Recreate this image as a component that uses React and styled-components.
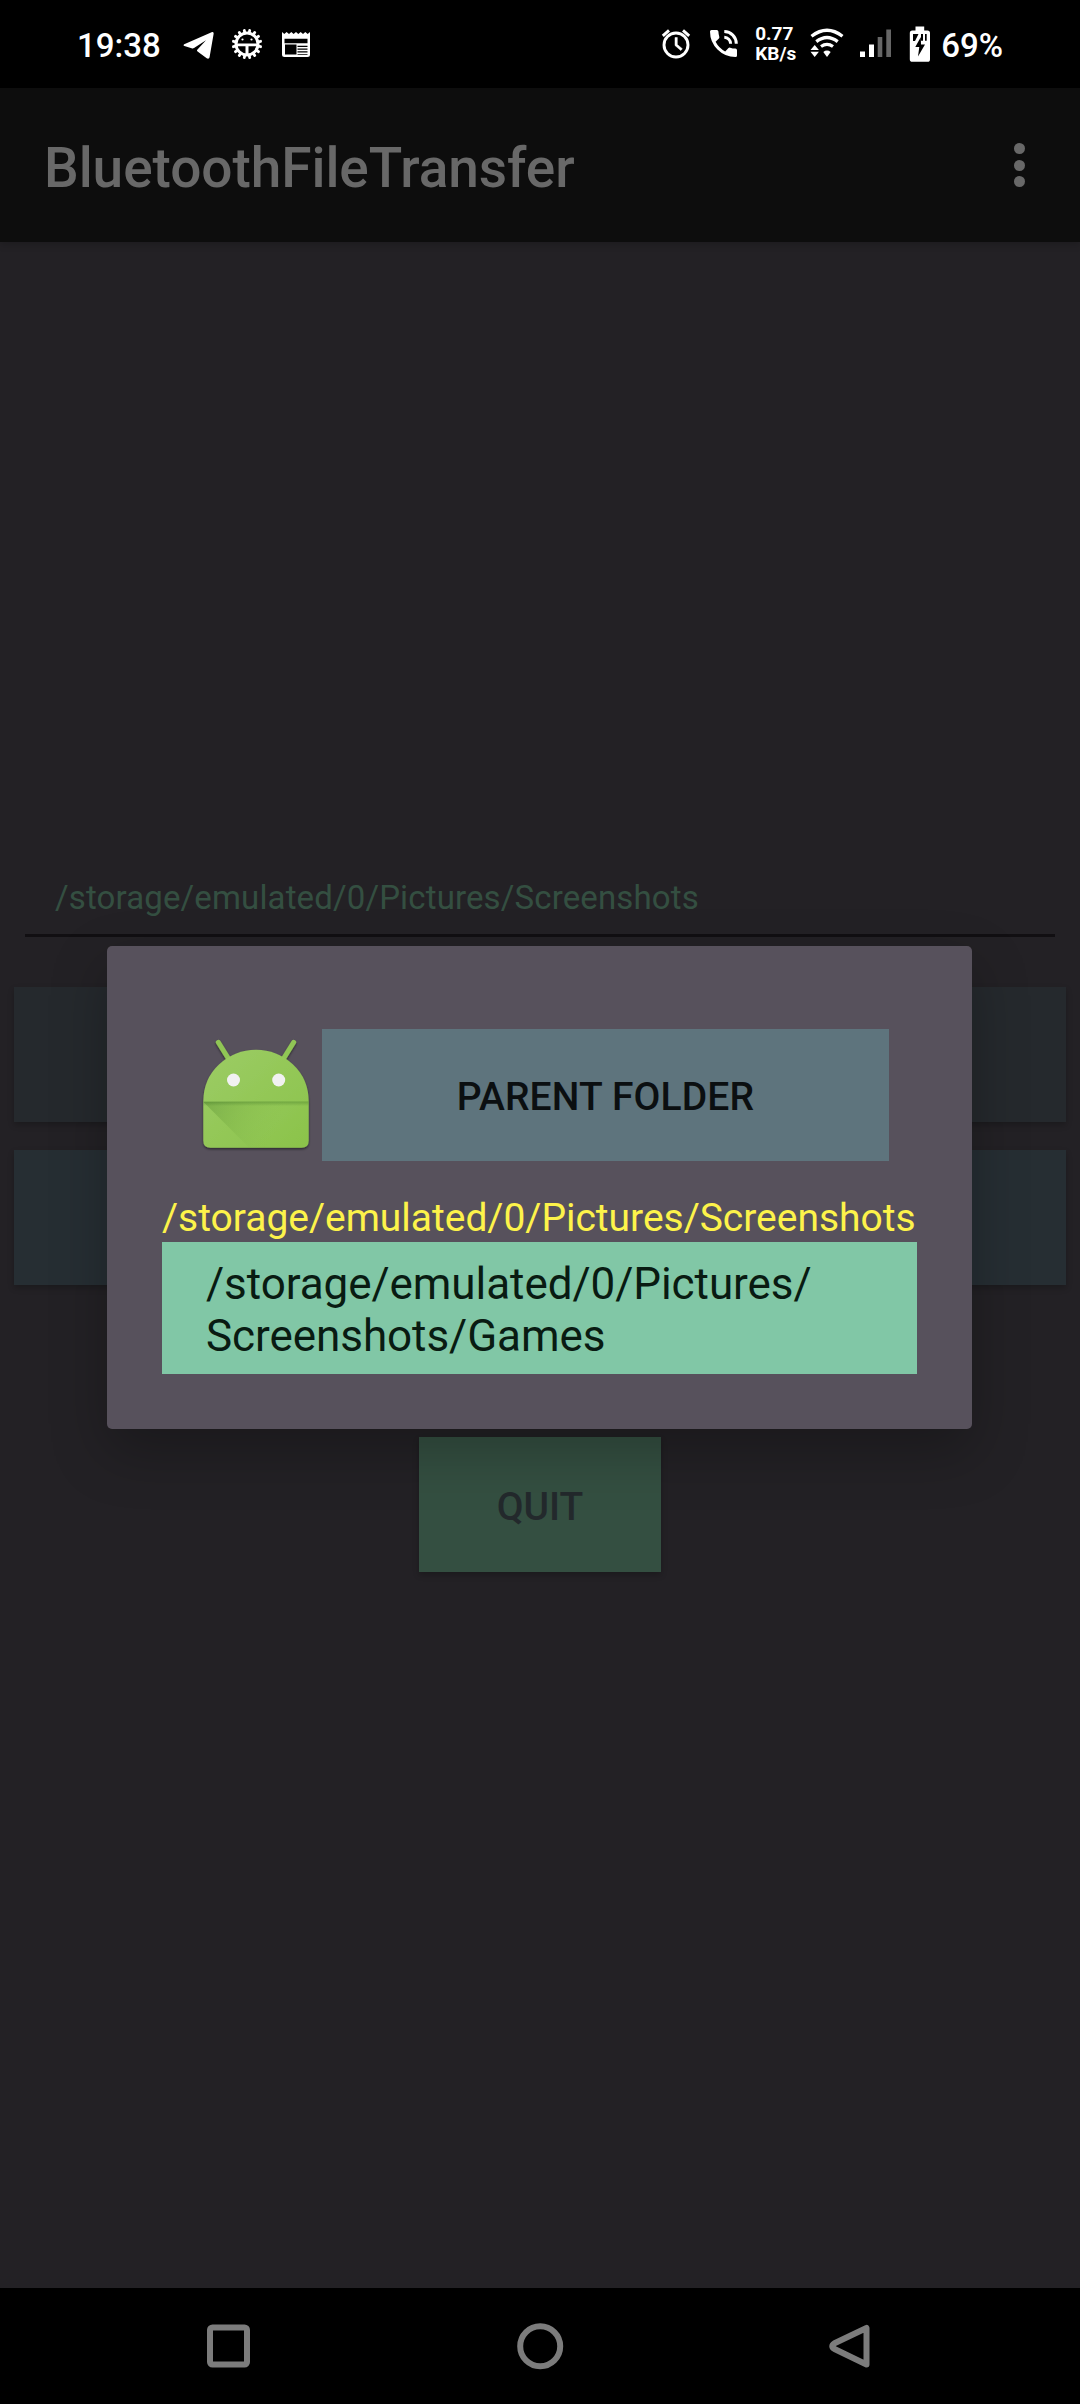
import React from "react";
import styled, { createGlobalStyle } from "styled-components";

const GlobalStyle = createGlobalStyle`
  * { box-sizing: border-box; }
  html, body { margin: 0; padding: 0; background: #232125; }
  body { font-family: Roboto, "Noto Sans", sans-serif; }
`;

const Screen = styled.div`
  position: relative;
  display: flex;
  flex-direction: column;
  width: 1080px;
  height: 2404px;
  overflow: hidden;
  background: #232125;
`;

const StatusBar = styled.header`
  display: flex;
  justify-content: space-between;
  flex: none;
  height: 88px;
  padding: 0 77px;
  background: #000;
  color: #fff;
`;

const StatusGroup = styled.div`
  display: flex;
  align-items: center;
`;

const StatusText = styled.span`
  font-size: 33px;
  font-weight: 500;
  line-height: 40px;
  margin-left: ${(p) => p.$before || 0}px;
  padding-top: 3px;
`;

const NetworkSpeed = styled.span`
  width: 42px;
  margin-left: 17px;
  font-size: 19px;
  font-weight: 700;
  line-height: 20px;
`;

const StatusIcon = styled.svg`
  flex: none;
  display: block;
  width: ${(p) => p.$w}px;
  height: 40px;
  margin-left: ${(p) => p.$before || 0}px;
  fill: #fff;
`;

const AppBar = styled.div`
  position: relative;
  display: flex;
  align-items: center;
  justify-content: space-between;
  flex: none;
  height: 154px;
  padding: 0 44px 0 44px;
  background: #0d0d0d;
  box-shadow: 0 2px 8px rgba(0, 0, 0, 0.2);
`;

const Title = styled.h1`
  margin: 0;
  padding-top: 5px;
  font-size: 55px;
  font-weight: 500;
  line-height: 64px;
  letter-spacing: -0.06px;
  color: #686868;
`;

const OverflowMenu = styled.button`
  display: flex;
  flex-direction: column;
  align-items: center;
  gap: 5.5px;
  width: 34px;
  padding: 0;
  border: 0;
  background: none;
`;

const Dot = styled.span`
  width: 11px;
  height: 11px;
  border-radius: 50%;
  background: #686868;
`;

const Content = styled.main`
  flex: 1;
  display: flex;
  flex-direction: column;
  align-items: stretch;
  padding: 634px 14px 0;
`;

const PathField = styled.div`
  height: 61px;
  margin: 0 11px;
  padding: 2px 30px 0;
  border-bottom: 3px solid #110f12;
  font-size: 33px;
  line-height: 39px;
  letter-spacing: 0.14px;
  color: #344f41;
`;

const PlainButton = styled.button`
  height: 135px;
  margin: ${(p) => p.$top}px 0 0;
  padding: 0;
  border: 0;
  background: ${(p) => p.$tone};
  box-shadow: 0 3px 6px rgba(0, 0, 0, 0.22);
`;

const QuitButton = styled(PlainButton)`
  align-self: center;
  width: 242px;
  padding-top: 5px;
  font-family: inherit;
  font-size: 39px;
  font-weight: 500;
  color: #23292c;
`;

const Dialog = styled.section`
  position: absolute;
  top: 946px;
  left: 107px;
  display: flex;
  flex-direction: column;
  width: 865px;
  height: 483px;
  padding: 83px 55px 55px;
  border-radius: 5px;
  background: #57515c;
  box-shadow: 0 22px 56px rgba(0, 0, 0, 0.26);
`;

const DialogHeader = styled.div`
  display: flex;
  height: 132px;
  padding-right: 28px;
`;

const RobotIcon = styled.svg`
  flex: none;
  width: 132px;
  height: 132px;
  margin-left: 28px;
`;

const ParentButton = styled.button`
  flex: 1;
  border: 0;
  padding: 3px 0 0;
  background: #5e747d;
  font-family: inherit;
  font-size: 39px;
  font-weight: 500;
  letter-spacing: 0.15px;
  color: #0b0f11;
`;

const CurrentPath = styled.p`
  margin: 30px -6px 0 0;
  padding-bottom: 2px;
  height: 51px;
  font-size: 39px;
  line-height: 55px;
  letter-spacing: -0.02px;
  white-space: nowrap;
  color: #fdf34a;
`;

const FolderList = styled.ul`
  margin: 0;
  padding: 0;
  list-style: none;
`;

const FolderItem = styled.li`
  display: flex;
  align-items: center;
  height: 132px;
  padding: 4px 44px 0;
  background: #81c7a6;
  font-size: 44px;
  line-height: 52px;
  letter-spacing: -0.06px;
  color: #091b12;
`;

const NavBar = styled.nav`
  display: flex;
  align-items: center;
  justify-content: space-between;
  flex: none;
  height: 116px;
  padding: 0 204px;
  background: #000;
`;

const NavIcon = styled.svg`
  width: 50px;
  height: 50px;
  fill: none;
  stroke: #7c7c7c;
  stroke-width: 6;
  stroke-linejoin: round;
`;

const GearTeeth = () =>
  Array.from({ length: 16 }, (_, i) => (
    <rect key={i} x="14.6" y="4.8" width="2.8" height="5" rx="1.2" transform={`rotate(${i * 22.5 + 11.25} 16 20)`} />
  ));

function StatusIcons() {
  return (
    <StatusGroup>
      <StatusText>19:38</StatusText>
      <StatusIcon $w={31} $before={22} viewBox="0 0 31 40">
        <path d="M1.2 20.2 28.6 8.3c1.4-.6 2.3.2 2 1.6l-4 23.2c-.3 1.6-1.6 2-2.900 1.100L14.600 27.600c-.8-.6-.8-1.300-.1-2l8.500-9.400-12 7.900c-.8.500-1.500.500-2.400.200L1.400 22.100c-1-.4-1.100-1.400-.2-1.900Z" />
      </StatusIcon>
      <StatusIcon $w={32} $before={17} viewBox="0 0 32 40">
        <GearTeeth />
        <circle cx="16" cy="20" r="11" fill="#000" stroke="#fff" strokeWidth="3" />
        <path d="M5 19.500h22v2.700H17.500V31h-3V22.200H5Z" />
        <circle cx="11.500" cy="15.500" r="1.100" />
        <circle cx="20.500" cy="15.500" r="1.100" />
      </StatusIcon>
      <StatusIcon $w={28} $before={19} viewBox="0 0 28 40">
        <path d="M0 8l2.300 2L4.600 8l2.400 2L9.300 8l2.300 2L14 8l2.300 2 2.400-2L21 10l2.300-2 2.400 2L28 8v22.500q0 2.500-2.500 2.500h-23Q0 33 0 30.500Z" />
        <path d="M2.500 14.700h23v4.600h-23zM3 20.500h11.500V30.400H3zM15.500 21.800H25.500v1.300h-10zM15.500 24.600H25.500v1.200h-10zM15.500 27.300H25.500v1.200h-10zM15.500 29.900H25.500v.9h-10z" fill="#000" />
      </StatusIcon>
    </StatusGroup>
  );
}

function SystemIcons() {
  return (
    <StatusGroup>
      <StatusIcon $w={30} viewBox="0 0 30 40">
        <circle cx="15" cy="21" r="12" fill="none" stroke="#fff" strokeWidth="2.900" />
        <path d="M14 13.500h2.300v7l5 4.200-1.500 1.800-5.800-5Z" stroke="#fff" strokeWidth=".5" />
        <path d="M1.800 11.800 8 6.400M28.200 11.800 22 6.400" stroke="#fff" strokeWidth="3" />
      </StatusIcon>
      <StatusIcon $w={28} $before={19} viewBox="0 0 28 40">
        <path d="M1.500 6h5.300q1.500 0 1.600 1.500.1 2.700.9 5.200.3 1-.4 1.700l-3.300 3.300q3.200 6.300 9.600 9.700l3.300-3.300q.7-.7 1.700-.4 2.500.8 5.200.9Q27 24.700 27 26.300v5.200q0 1.500-1.500 1.500Q15 33 7.500 25.500T0 7.500Q0 6 1.500 6Z" />
        <path d="M14.300 7.500A12.200 12.200 0 0 1 26.300 19.700M14.300 13.200A6.500 6.500 0 0 1 20.600 19.700" fill="none" stroke="#fff" strokeWidth="3" />
      </StatusIcon>
      <NetworkSpeed>
        0.77
        <br />
        KB/s
      </NetworkSpeed>
      <StatusIcon $w={34} $before={13} viewBox="0 0 34 40">
        <g fill="none" stroke="#fff" strokeWidth="3.300">
          <path d="M1.500 12.300Q17 .3 32.500 12.300" />
          <path d="M6.300 17.600Q17 9.300 27.700 17.600" />
          <path d="M11 22.500Q17 18.300 23 22.500" />
        </g>
        <path d="M13.300 28q3.700-2.800 7.400 0L17 33Z" />
        <path d="M4.700 21l4.200 5H.5ZM.5 27.800h8.400l-4.200 5.200Z" />
      </StatusIcon>
      <StatusIcon $w={31} $before={16} viewBox="0 0 31 40">
        <path d="M0 27.500h5V33H0zM9 20.500h5V33H9z" />
        <path d="M17.700 13h4.600v20h-4.600zM26.300 5.500h4.700V33h-4.700z" fill="#666" />
      </StatusIcon>
      <StatusIcon $w={22} $before={18} viewBox="0 0 22 40">
        <path d="M6.500 2.500h8.700v4h3.300q2.500 0 2.500 2.500v26.200q0 2.600-2.500 2.600h-15Q.8 37.800.8 35.200V9Q.8 6.500 3.300 6.500h3.200Z" />
        <path d="M4 10h5.500L6 17H4ZM12 10h2v6.700h-2ZM16 10h1.700v6.700H16ZM11.800 13 6.300 23h4l-1.300 9.500L16 20.400h-4Z" fill="#000" />
      </StatusIcon>
      <StatusText $before={10}>69%</StatusText>
    </StatusGroup>
  );
}

function AndroidRobot() {
  return (
    <RobotIcon viewBox="190 1029 132 132">
      <defs>
        <linearGradient id="head" x1="0" y1="0" x2="1" y2="1">
          <stop offset="0" stopColor="#9ccc65" />
          <stop offset="1" stopColor="#8bc34a" />
        </linearGradient>
        <linearGradient id="fold" gradientUnits="userSpaceOnUse" x1="204" y1="1104" x2="275" y2="1135">
          <stop offset="0" stopColor="#558b2f" stopOpacity=".42" />
          <stop offset="1" stopColor="#8bc34a" stopOpacity="0" />
        </linearGradient>
        <linearGradient id="crease" x1="0" y1="0" x2="0" y2="1">
          <stop offset="0" stopColor="#33691e" stopOpacity=".35" />
          <stop offset="1" stopColor="#33691e" stopOpacity="0" />
        </linearGradient>
        <filter id="lift" x="-10%" y="-10%" width="120%" height="125%">
          <feDropShadow dx="0" dy="1.5" stdDeviation="1.200" floodOpacity=".5" />
        </filter>
      </defs>
      <g filter="url(#lift)">
        <path d="M218.300 1042.300 229 1059.500M293.700 1042.300 283 1059.500" stroke="#90c654" strokeWidth="5" strokeLinecap="round" />
        <path d="M203.300 1102Q203.300 1079 219 1064.500 235 1049.800 256 1049.800T293 1064.500Q308.700 1079 308.700 1102V1140.500Q308.700 1147.800 301.500 1147.800H210.500Q203.300 1147.800 203.300 1140.500Z" fill="url(#head)" />
      </g>
      <path d="M203.500 1102H308.500V1147.500H249Z" fill="url(#fold)" />
      <rect x="203.500" y="1101.500" width="105" height="4.500" fill="url(#crease)" />
      <circle cx="233.500" cy="1080" r="6.500" fill="#f1f1f1" />
      <circle cx="278.700" cy="1080" r="6.500" fill="#f1f1f1" />
    </RobotIcon>
  );
}

export default function App() {
  return (
    <>
      <GlobalStyle />
      <Screen>
        <StatusBar>
          <StatusIcons />
          <SystemIcons />
        </StatusBar>
        <AppBar>
          <Title>BluetoothFileTransfer</Title>
          <OverflowMenu>
            <Dot />
            <Dot />
            <Dot />
          </OverflowMenu>
        </AppBar>
        <Content>
          <PathField>/storage/emulated/0/Pictures/Screenshots</PathField>
          <PlainButton $top={50} $tone="#25292d" />
          <PlainButton $top={28} $tone="#262e33" />
          <QuitButton $top={152} $tone="#344f41">QUIT</QuitButton>
        </Content>
        <NavBar>
          <NavIcon viewBox="0 0 50 50">
            <rect x="6" y="6.500" width="37" height="37" rx="2.500" />
          </NavIcon>
          <NavIcon viewBox="0 0 50 50">
            <circle cx="25.200" cy="25.300" r="20" />
          </NavIcon>
          <NavIcon viewBox="0 0 50 50">
            <path d="M40.500 7V43.500L8.500 28Q4 25.200 8.500 22.300Z" />
          </NavIcon>
        </NavBar>
        <Dialog>
          <DialogHeader>
            <AndroidRobot />
            <ParentButton>PARENT FOLDER</ParentButton>
          </DialogHeader>
          <CurrentPath>/storage/emulated/0/Pictures/Screenshots</CurrentPath>
          <FolderList>
            <FolderItem>
              /storage/emulated/0/Pictures/
              <br />
              Screenshots/Games
            </FolderItem>
          </FolderList>
        </Dialog>
      </Screen>
    </>
  );
}
